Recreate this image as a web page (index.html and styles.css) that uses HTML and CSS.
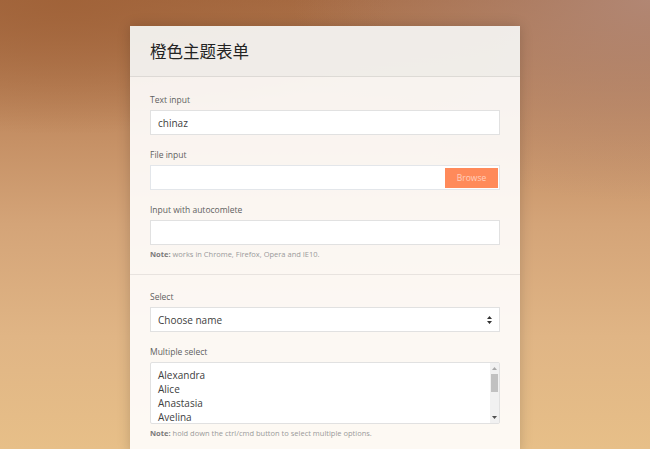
FILE: index.html
```html
<!DOCTYPE html>
<html lang="zh">
<head>
    <meta charset="UTF-8">
    <meta name="viewport" content="width=device-width, initial-scale=1.0">
    <title>橙色主题表单</title>
    <link rel="stylesheet" href="styles.css">
</head>
<body>
    <form class="sky-form">
        <header class="form-header">橙色主题表单</header>

        <fieldset>
            <section>
                <label class="label">Text input</label>
                <input class="input" type="text" value="chinaz">
            </section>

            <section>
                <label class="label">File input</label>
                <div class="file-box">
                    <span class="button">Browse</span>
                </div>
            </section>

            <section>
                <label class="label">Input with autocomlete</label>
                <input class="input" type="text">
                <div class="note"><strong>Note:</strong> works in Chrome, Firefox, Opera and IE10.</div>
            </section>
        </fieldset>

        <fieldset>
            <section>
                <label class="label">Select</label>
                <div class="select-box">
                    <select class="select">
                        <option>Choose name</option>
                        <option>Alexandra</option>
                        <option>Alice</option>
                    </select>
                    <svg class="arrows" width="5" height="8" viewBox="0 0 5 8">
                        <path d="M2.5 0 L5 3 L0 3 Z M0 5 L5 5 L2.5 8 Z" fill="#333"/>
                    </svg>
                </div>
            </section>

            <section>
                <label class="label">Multiple select</label>
                <div class="multi-box">
                    <select class="multi" multiple>
                        <option>Alexandra</option>
                        <option>Alice</option>
                        <option>Anastasia</option>
                        <option>Avelina</option>
                        <option>Basilia</option>
                        <option>Beatrice</option>
                        <option>Cassandra</option>
                        <option>Cecil</option>
                        <option>Clemencia</option>
                        <option>Desiderata</option>
                        <option>Dionisia</option>
                        <option>Edith</option>
                        <option>Eleanora</option>
                        <option>Elizabeth</option>
                        <option>Emma</option>
                    </select>
                    <div class="scrollbar">
                        <svg class="scroll-up" width="5" height="3" viewBox="0 0 5 3"><path d="M2.5 0 L5 3 L0 3 Z" fill="#a8a8a8"/></svg>
                        <div class="thumb"></div>
                        <svg class="scroll-down" width="5" height="3" viewBox="0 0 5 3"><path d="M0 0 L5 0 L2.5 3 Z" fill="#505050"/></svg>
                    </div>
                </div>
                <div class="note"><strong>Note:</strong> hold down the ctrl/cmd button to select multiple options.</div>
            </section>
        </fieldset>
    </form>
</body>
</html>
```

FILE: styles.css
```css
html, body {
    height: 100%;
}

body {
    margin: 0;
    padding: 26px 0 0;
    box-sizing: border-box;
    overflow: hidden;
    font-family: "Open Sans", "Noto Sans", sans-serif;
    background:
        radial-gradient(ellipse 55% 45% at 100% 0%, rgba(178,136,118,0.95), rgba(178,136,118,0) 100%),
        radial-gradient(ellipse 50% 30% at 10% 0%, rgba(160,98,56,0.9), rgba(160,98,56,0) 100%),
        linear-gradient(180deg, #a76c44 0%, #c38d62 28%, #d4a478 50%, #e0b585 75%, #e7bf88 100%);
}

.sky-form {
    width: 390px;
    margin: 0 auto;
    background: rgba(255,255,255,0.9);
    box-shadow: 0 0 12px rgba(0,0,0,0.18);
}

.form-header {
    height: 50px;
    padding: 0 20px;
    display: flex;
    align-items: center;
    border-bottom: 1px solid rgba(0,0,0,0.08);
    background: rgba(236,233,230,0.7);
    font-family: "Noto Sans CJK SC", "Noto Sans", sans-serif;
    font-size: 16.5px;
    color: #232323;
}

fieldset {
    margin: 0;
    border: 0;
    padding: 17px 20px 15px;
}

fieldset + fieldset {
    border-top: 1px solid rgba(0,0,0,0.08);
    padding-top: 16px;
}

section + section {
    margin-top: 14px;
}

.label {
    display: block;
    height: 12px;
    line-height: 12px;
    margin-bottom: 4px;
    font-size: 8.5px;
    color: #5f5f5f;
}

.input,
.file-box,
.select,
.multi {
    display: block;
    width: 100%;
    box-sizing: border-box;
    border: 1px solid #e1e1e1;
    background: #fff;
    font-family: "Open Sans", "Noto Sans", sans-serif;
    font-size: 10px;
    color: #404040;
    outline: none;
}

.input,
.select {
    height: 25px;
    padding: 0 7px;
}

.file-box {
    height: 25px;
    display: flex;
    justify-content: flex-end;
    align-items: center;
    padding-right: 1px;
    border-color: #e3e6ea;
}

.button {
    width: 53px;
    height: 20px;
    line-height: 20px;
    text-align: center;
    background: #ff8a5a;
    color: rgba(255,255,255,0.6);
    font-size: 8.5px;
}

.select-box,
.multi-box {
    position: relative;
}

.select {
    appearance: none;
    -webkit-appearance: none;
    border-radius: 0;
}

.arrows {
    position: absolute;
    right: 8px;
    top: 9px;
}

.multi {
    height: 62px;
    padding: 5px 0 0 7px;
    overflow: hidden;
}

.multi option {
    padding: 0;
    line-height: 13px;
    min-height: 13px;
    font-size: 10px;
}

/* fake scrollbar, headless chrome hides the native one */
.scrollbar {
    position: absolute;
    top: 1px;
    right: 1px;
    bottom: 1px;
    width: 9px;
    background: #f1f1f1;
    display: flex;
    flex-direction: column;
    align-items: center;
}

.scroll-up {
    margin-top: 4px;
}

.thumb {
    width: 7px;
    height: 18px;
    margin-top: 4px;
    background: #c1c1c1;
}

.scroll-down {
    margin-top: auto;
    margin-bottom: 4px;
}

.note {
    margin-top: 4px;
    line-height: 10px;
    font-size: 7.5px;
    color: #9a9a9a;
}

.note strong {
    color: #7a7a7a;
}
```
